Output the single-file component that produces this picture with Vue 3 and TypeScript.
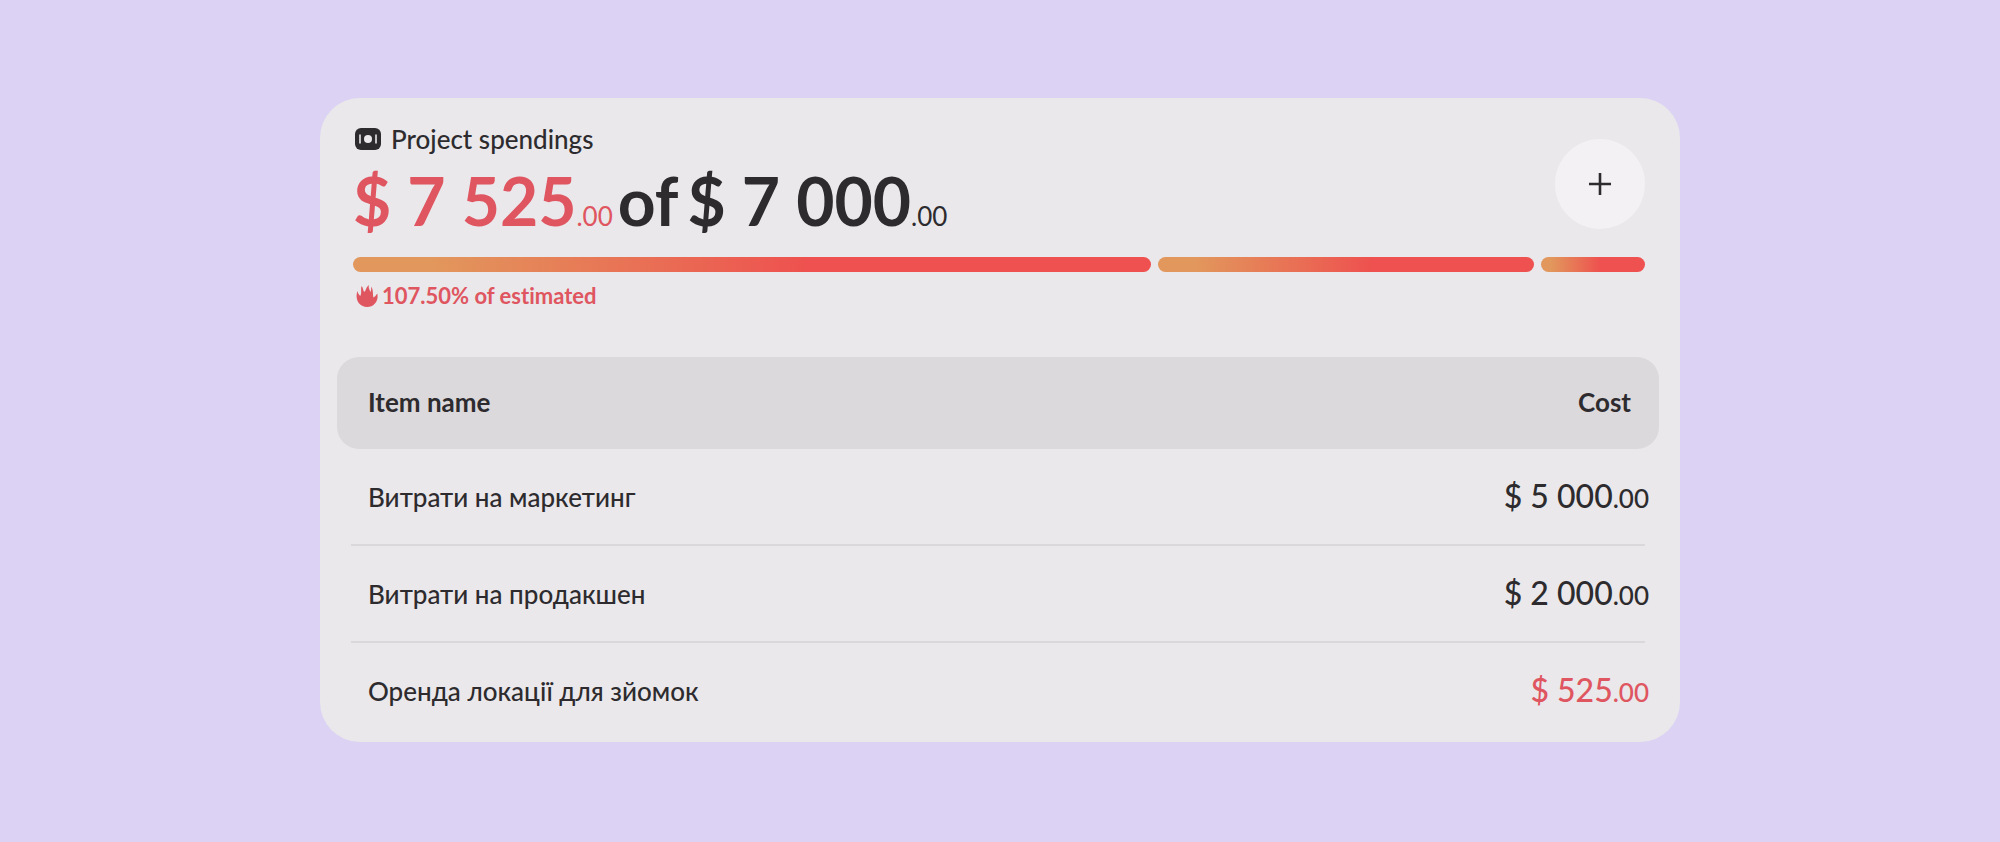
<script setup lang="ts">
interface Item {
  name: string
  whole: string
  cents: string
  over?: boolean
}

const segments: number[] = [798, 376, 104]

const items: Item[] = [
  { name: 'Витрати на маркетинг', whole: '$ 5 000', cents: '.00' },
  { name: 'Витрати на продакшен', whole: '$ 2 000', cents: '.00' },
  { name: 'Оренда локації для зйомок', whole: '$ 525', cents: '.00', over: true },
]
</script>

<template>
  <main class="page">
    <section class="card">
      <header class="summary">
        <div class="heading">
          <h1 class="title">
            <svg class="cash" viewBox="0 0 26 22" aria-hidden="true">
              <rect width="26" height="22" rx="6" fill="#2d2b2e" />
              <circle cx="13" cy="11" r="4" fill="#ebe9eb" />
              <path d="M5 6.500v9M21 6.500v9" stroke="#ebe9eb" stroke-width="1.600" />
            </svg>
            Project spendings
          </h1>
          <p class="total">
            <span class="over">$ 7 525<small>.00</small></span>
            <span class="of">of</span>
            <span>$ 7 000<small>.00</small></span>
          </p>
        </div>
        <button class="add" type="button" aria-label="Add spending">
          <svg viewBox="0 0 22 22" aria-hidden="true">
            <path d="M11 0v22M0 11h22" stroke="#2d2b2e" stroke-width="2.600" />
          </svg>
        </button>
      </header>

      <div class="bars">
        <span v-for="(size, i) in segments" :key="i" class="bar" :style="{ flexGrow: size }"></span>
      </div>

      <p class="estimate">
        <svg class="flame" viewBox="0 0 22 22" aria-hidden="true">
          <path
            d="M1.500 6C2 8 2.500 9.500 4.200 11C6 8.500 4.500 4.500 5.500 1C7.500 3 6.800 5.500 8.300 7C10.300 5.500 9.500 2.500 13 0C12 3 13.700 4.500 14.300 7C15.500 5.500 15 3.500 15.300 1.500C17.500 5 16.600 9 17.300 12.500C20 11.500 20 9.500 21.300 8.500C22.800 15.500 18.500 22 11 22C3 22-1.500 14 1.500 6Z"
            fill="#df5560"
          />
        </svg>
        107.50% of estimated
      </p>

      <table class="items">
        <thead>
          <tr>
            <th scope="col">Item name</th>
            <th scope="col" class="cost">Cost</th>
          </tr>
        </thead>
        <tbody>
          <tr v-for="item in items" :key="item.name">
            <td>{{ item.name }}</td>
            <td class="cost" :class="{ over: item.over }">
              {{ item.whole }}<small>{{ item.cents }}</small>
            </td>
          </tr>
        </tbody>
      </table>
    </section>
  </main>
</template>

<style>
body {
  margin: 0;
  background: #dcd3f4;
}
</style>

<style scoped>
.page {
  box-sizing: border-box;
  min-height: 100vh;
  padding: 98px 16% 96px;
  background: #dcd3f4;
  color: #2d2b2e;
  font-family: Lato, "Noto Sans", sans-serif;
  font-variant-ligatures: none;
}

.card {
  padding-bottom: 2px;
  border-radius: 40px;
  background: #eae8eb;
  overflow: hidden;
}

.summary {
  display: flex;
  justify-content: space-between;
  align-items: center;
  padding: 24px 35px 0 33px;
}

.title {
  display: flex;
  align-items: center;
  gap: 10px;
  margin: 0;
  padding-left: 2px;
  font-size: 26px;
  line-height: 34px;
  font-weight: 500;
}

.cash {
  width: 26px;
  height: 22px;
}

.total {
  display: flex;
  align-items: baseline;
  margin: 0;
  font-size: 66px;
  line-height: 90px;
  font-weight: 700;
  white-space: nowrap;
}

.total small {
  font-size: 26px;
  line-height: 30px;
  font-weight: 400;
}

.of {
  margin: 0 9px 0 5px;
}

.over {
  color: #df5560;
}

.add {
  display: grid;
  place-items: center;
  width: 90px;
  height: 90px;
  padding: 0;
  border: 0;
  border-radius: 50%;
  background: #f3f1f4;
}

.add svg {
  width: 22px;
  height: 22px;
}

.bars {
  display: flex;
  gap: 7px;
  padding: 11px 35px 0 33px;
}

.bar {
  flex-basis: 0;
  height: 15px;
  border-radius: 8px;
  background: linear-gradient(90deg, #e2975c 10%, #ee514f 57%);
}

.estimate {
  display: flex;
  align-items: center;
  gap: 4px;
  margin: 0;
  padding: 8px 35px 0 36px;
  color: #df5560;
  font-size: 22px;
  line-height: 32px;
  font-weight: 700;
}

.flame {
  width: 22px;
  height: 22px;
}

.items {
  width: calc(100% - 38px);
  margin: 45px 21px 0 17px;
  border-collapse: separate;
  border-spacing: 0;
  font-size: 26px;
  line-height: 40px;
}

.items th {
  height: 92px;
  padding: 0 28px 2px 31px;
  box-sizing: border-box;
  background: #dbd9dc;
  font-weight: 700;
  text-align: left;
}

.items th:first-child {
  border-radius: 22px 0 0 22px;
}

.items th:last-child {
  border-radius: 0 22px 22px 0;
}

.items td {
  box-sizing: border-box;
  height: 97px;
  padding: 0 10px 2px 31px;
  background: linear-gradient(#dad8db, #dad8db) no-repeat right bottom / calc(100% - 14px) 2px;
  font-weight: 500;
}

.items td.cost {
  background-position: left bottom;
  font-size: 32px;
}

.items tr:last-child td {
  background: none;
}

.items .cost {
  text-align: right;
  white-space: nowrap;
}

.cost small {
  font-size: 26px;
}
</style>
